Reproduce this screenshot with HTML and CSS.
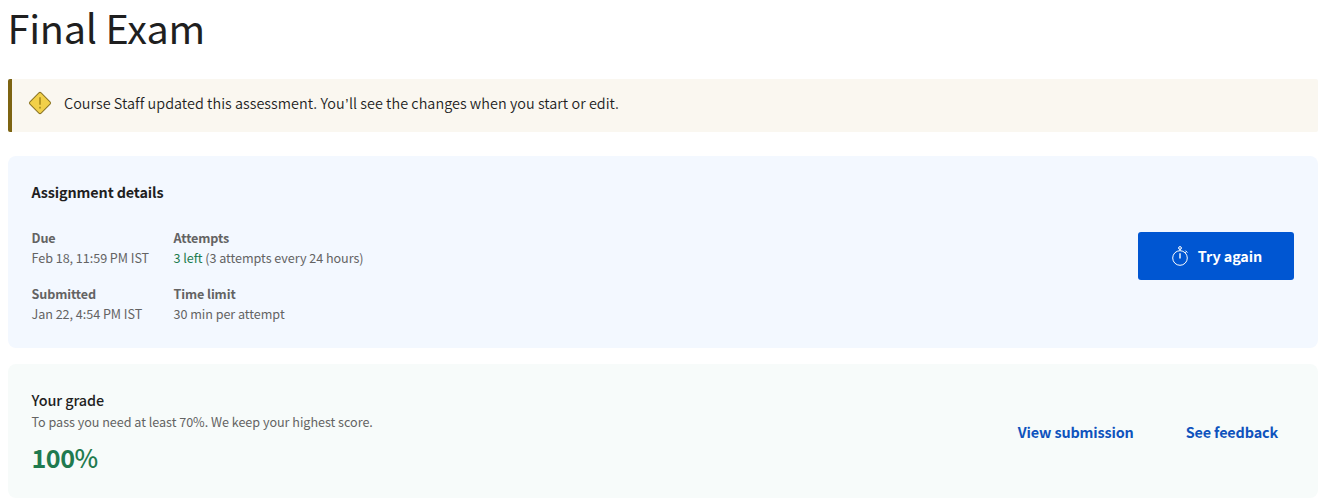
FILE: index.html
```html
<!DOCTYPE html>
<html lang="en">
<head>
<meta charset="utf-8">
<title>Final Exam</title>
<link rel="stylesheet" href="styles.css">
</head>
<body>
<main class="page">
  <h1 class="title">Final Exam</h1>
  <div class="alert">
    <svg class="alert-icon" width="24" height="24" viewBox="0 0 24 24"><rect x="4.1" y="4.1" width="15.8" height="15.8" rx="1.6" transform="rotate(45 12 12)" fill="#f2d049" stroke="#8a7322" stroke-width="1"/><path d="M12 6.2v7.6M12 15.8v1.8" stroke="#a68a1d" stroke-width="1.6" fill="none"/></svg>
    <p class="alert-text">Course Staff updated this assessment. You<span class="apostrophe">’</span>ll see the changes when you start or edit.</p>
  </div>
  <section class="card details">
    <div>
      <h2 class="heading">Assignment details</h2>
      <dl class="facts">
        <div><dt>Due</dt><dd>Feb 18, 11:59 PM IST</dd></div>
        <div><dt>Attempts</dt><dd><span class="left">3 left</span> (3 attempts every 24 hours)</dd></div>
        <div><dt>Submitted</dt><dd>Jan 22, 4:54 PM IST</dd></div>
        <div><dt>Time limit</dt><dd>30 min per attempt</dd></div>
      </dl>
    </div>
    <button class="primary">
      <svg width="20" height="20" viewBox="0 0 20 20" fill="none" stroke="#fff"><circle cx="10" cy="12" r="7.3"/><path d="M10 7.2v5.3" stroke-width="1.4"/><path d="M10 2.6v2M15.2 6.8l1.2-1.2M15.4 4.6l2 2"/><circle cx="10" cy="2" r="1.4"/></svg>
      <span>Try again</span>
    </button>
  </section>
  <section class="card grade">
    <div>
      <h2 class="heading heading-grade">Your grade</h2>
      <p class="note">To pass you need at least 70%. We keep your highest score.</p>
      <p class="score"><span class="score-number">100</span>%</p>
    </div>
    <div class="links"><a>View submission</a><a>See feedback</a></div>
  </section>
</main>
</body>
</html>
```
FILE: styles.css
```css
* { box-sizing: border-box; }
body { margin: 0; background: #fff; color: #1f1f1f; font-family: "Source Sans Pro", "Noto Sans CJK SC", "Noto Sans", sans-serif; }
h1, h2, p, dl, dd { margin: 0; }
.page { width: 1318px; padding-left: 8px; white-space: nowrap; }
.title { height: 79px; font-size: 39.6px; line-height: 53px; font-weight: 400; letter-spacing: -0.2px; text-indent: -0.5px; }
.alert { height: 53px; display: flex; align-items: flex-start; padding: 12px 16px; background: #faf7f0; border-left: 4px solid #7d6412; border-radius: 2px; margin-bottom: 24px; }
.alert-icon { flex: none; margin-right: 12px; }
.alert-text { font-size: 14.4px; line-height: 24px; font-weight: 350; letter-spacing: 0.035px; color: #1f1f1f; }
.apostrophe { font-family: "Liberation Sans", sans-serif; line-height: 1; margin: 0 0.5px; }
.card { display: flex; justify-content: space-between; padding: 24px 24px 24px 23.5px; border-radius: 8px; }
.details { height: 192px; background: #f3f8ff; margin-bottom: 16px; }
.grade { height: 134px; background: #f7fbfa; }
.heading { font-size: 14.4px; line-height: 24px; font-weight: 700; letter-spacing: -0.14px; }
.heading-grade { font-weight: 500; letter-spacing: -0.08px; }
.facts { display: grid; grid-template-columns: 118px auto; column-gap: 24px; row-gap: 16px; margin-top: 24px; font-size: 12.6px; line-height: 20px; letter-spacing: -0.04px; color: #636363; }
dt { font-weight: 700; letter-spacing: -0.1px; }
.left { color: #1d7c50; }
.primary { width: 156px; height: 48px; margin: 52px 0 0; border: 0; border-radius: 3px; background: #0056d2; color: #fff; display: flex; align-items: center; justify-content: center; gap: 8px; font: 700 14.4px/24px "Source Sans Pro", "Noto Sans CJK SC", "Noto Sans", sans-serif; letter-spacing: -0.1px; }
.note { font-size: 12.6px; line-height: 20px; letter-spacing: -0.025px; color: #636363; }
.score { margin-top: 7px; font-size: 25.2px; line-height: 36px; letter-spacing: -0.5px; color: #1f7a4f; font-weight: 500; }
.score-number { font-weight: 700; }
.links { display: flex; gap: 52px; margin: 32px 16px 0 0; font-size: 14.4px; line-height: 24px; font-weight: 700; letter-spacing: -0.14px; color: #0f53bd; }
```
